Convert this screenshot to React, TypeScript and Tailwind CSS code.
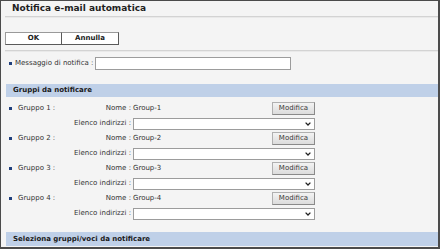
import React from "react";

const Bullet = ({ cls }: { cls: string }) => (
  <span className={`block w-[3px] h-[3px] bg-[#203f7c] shrink-0 ${cls}`} />
);

const Chevron = () => (
  <svg width="6" height="4" viewBox="0 0 6 4" className="block">
    <path d="M0.6 0.6 L3 3 L5.4 0.6" fill="none" stroke="#222" strokeWidth="1.3" />
  </svg>
);

function Group({ n }: { n: number }) {
  return (
    <div className="flex flex-col">
      <div className="flex h-[15px] items-center">
        <div className="w-[126px] flex items-center justify-between">
          <div className="flex items-center">
            <Bullet cls="ml-[4px]" />
            <span className="ml-[6px]">Gruppo {n} :</span>
          </div>
          <span>Nome :</span>
        </div>
        <div className="ml-[2px] w-[182px] flex items-center justify-between">
          <span>Group-{n}</span>
          <button className="w-[43px] h-[13px] flex items-center justify-center bg-gradient-to-b from-[#f3f3f3] to-[#dcdcdc] border border-[#b0b0b0] border-r-[#8a8a8a] border-b-[#8a8a8a] text-[7px] text-[#3a3a3a] leading-none">
            Modifica
          </button>
        </div>
      </div>
      <div className="flex h-[15px] items-center">
        <div className="w-[126px] text-right">Elenco indirizzi :</div>
        <div className="ml-[2px] w-[182px] h-[12px] bg-white border border-[#9c9c9c] flex items-center justify-end pr-[3px]">
          <Chevron />
        </div>
      </div>
    </div>
  );
}

export default function App() {
  return (
    <div className="w-[440px] h-[249px] overflow-hidden bg-[#f4f4f4] border-t border-l border-r-2 border-b-2 border-[#4b4b4b] font-['DejaVu_Sans',sans-serif] text-[7px] text-[#333] leading-none">
      <div className="pl-[4px]">
        <div className="h-[14px] leading-[14px] pl-[7px] text-[9px] font-bold text-[#1e1e1e]">
          Notifica e-mail automatica
        </div>
        <div className="mt-px h-[2px] border-t border-[#d3d3d3] bg-[#e9e9e9]" />

        <div className="mt-[14px] flex h-[13px]">
          <button className="w-[57px] h-full flex items-center justify-center bg-white border border-[#9a9a9a] border-r-[#5a5a5a] border-b-[#5a5a5a] font-bold text-[7px] text-[#222] leading-none">
            OK
          </button>
          <button className="w-[57px] h-full flex items-center justify-center bg-white border border-[#9a9a9a] border-l-0 border-r-[#5a5a5a] border-b-[#5a5a5a] font-bold text-[7px] text-[#222] leading-none">
            Annulla
          </button>
        </div>

        <div className="mt-[5px] h-[2px] border-t border-[#d3d3d3] bg-[#e9e9e9]" />

        <div className="mt-[5px] flex items-center h-[13px]">
          <Bullet cls="ml-[4px]" />
          <span className="ml-[3px] w-[80px] whitespace-nowrap">Messaggio di notifica :</span>
          <div className="w-[196px] h-[13px] bg-white border border-[#9c9c9c]" />
        </div>

        <div className="mt-[14px] ml-px h-[13px] bg-[#bfd0e8] flex items-center pl-[7px] font-bold text-[#1a1a1a]">
          Gruppi da notificare
        </div>

        <div className="mt-[4px] flex flex-col">
          <Group n={1} />
          <Group n={2} />
          <Group n={3} />
          <Group n={4} />
        </div>

        <div className="mt-[11px] ml-px h-[14px] bg-[#bfd0e8] flex items-center pl-[7px] font-bold text-[#1a1a1a]">
          Seleziona gruppi/voci da notificare
        </div>
      </div>
    </div>
  );
}
